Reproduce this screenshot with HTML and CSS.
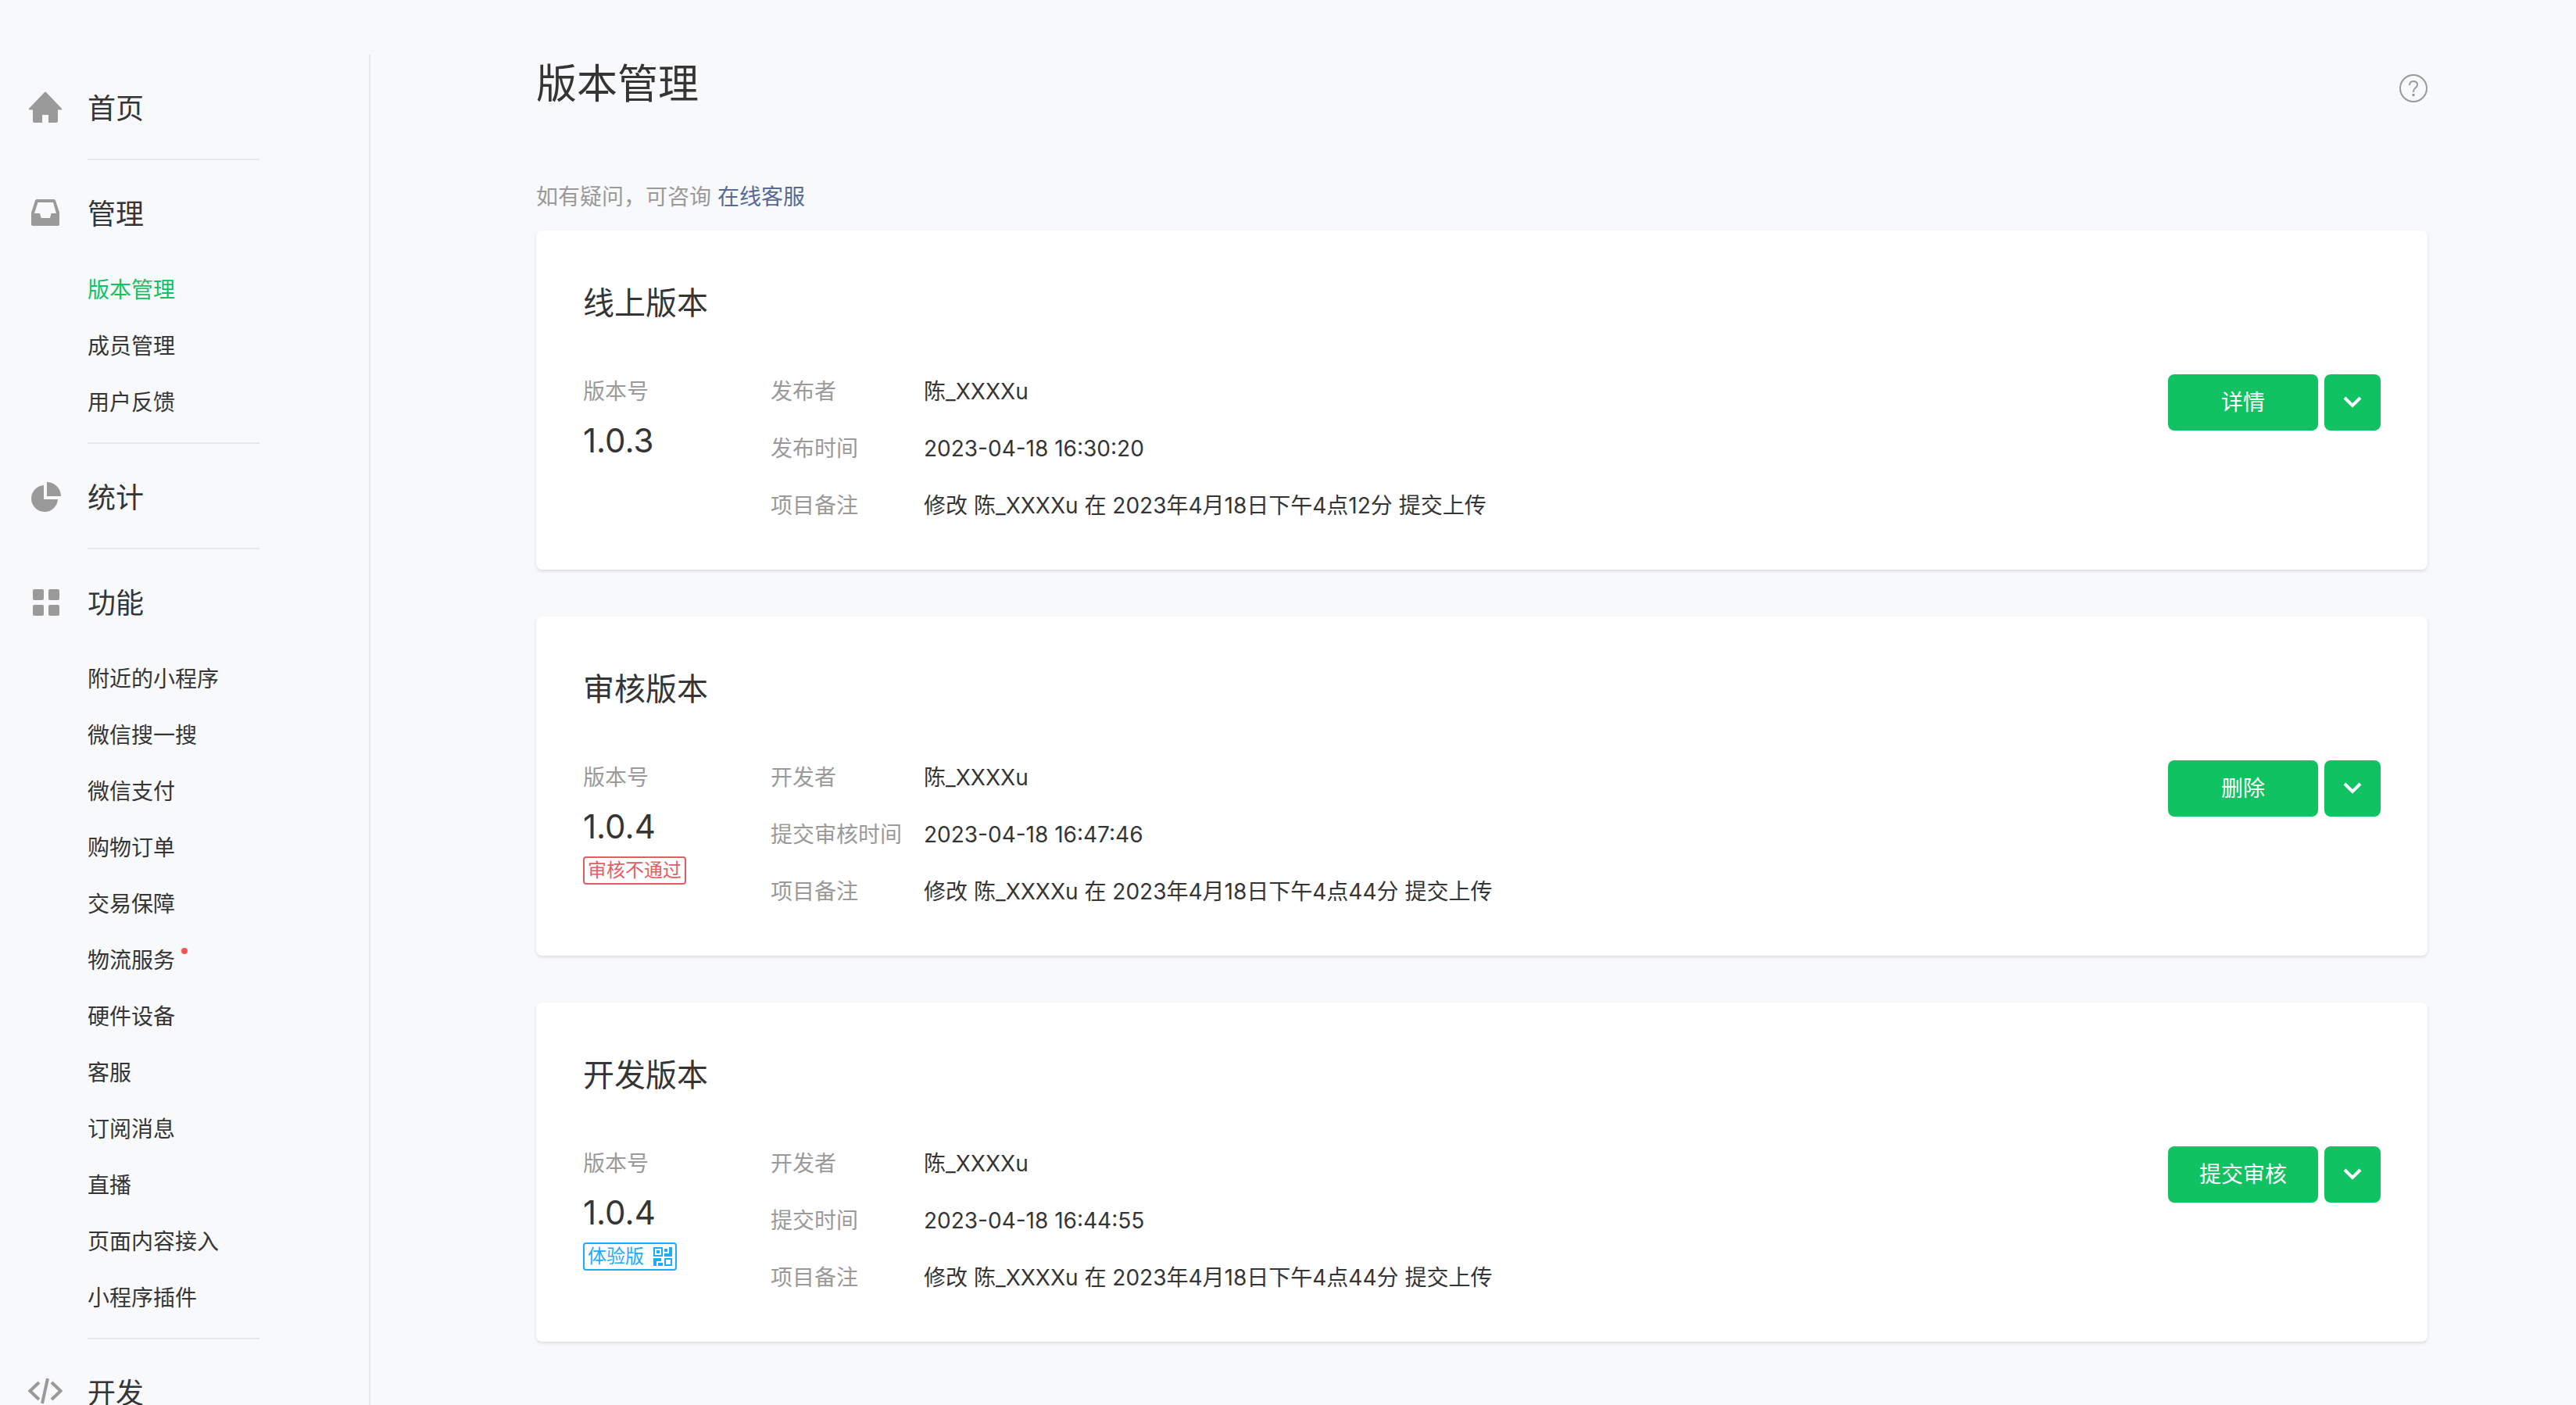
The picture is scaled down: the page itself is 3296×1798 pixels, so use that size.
FILE: index.html
```html
<!DOCTYPE html>
<html lang="zh-CN">
<head>
<meta charset="utf-8">
<title>版本管理</title>
<link rel="stylesheet" href="styles.css">
</head>
<body>
<div class="layout">
  <nav class="sidebar">
    <section class="menu">
      <h2 class="menu-title">
        <svg class="menu-icon" viewBox="0 2 44 44"><path d="M21 3q1-1 2 0l20 21q1 1.500-1 1.500h-4V40q0 2-2 2H26V32h-8v10H8q-2 0-2-2V25.500H2q-2 0-1-1.500z"/></svg>
        <a href="#home">首页</a>
      </h2>
    </section>
    <section class="menu menu-open">
      <h2 class="menu-title">
        <svg class="menu-icon" viewBox="0 2 44 44"><path fill-rule="evenodd" d="M11 5h22q1.500 0 2 1.500L40 22v15q0 2-2 2H6q-2 0-2-2V22L9 6.500Q9.500 5 11 5zm1.500 4L8 23h7l1.500 6h11.500l1.500-6h6.500L32 9z"/></svg>
        <a href="#manage">管理</a>
      </h2>
      <ul class="menu-list">
        <li><a class="current" href="#version">版本管理</a></li>
        <li><a href="#member">成员管理</a></li>
        <li><a href="#feedback">用户反馈</a></li>
      </ul>
    </section>
    <section class="menu">
      <h2 class="menu-title">
        <svg class="menu-icon" viewBox="0 1 44 44"><path d="M20 7v18h18a17 17 0 1 1-18-18z"/><path d="M24 3a18 18 0 0 1 18 18H24z"/></svg>
        <a href="#stats">统计</a>
      </h2>
    </section>
    <section class="menu menu-open">
      <h2 class="menu-title">
        <svg class="menu-icon" viewBox="0 1 44 44"><rect x="6" y="5" width="14" height="14" rx="2"/><rect x="26" y="5" width="14" height="14" rx="2"/><rect x="6" y="25" width="14" height="14" rx="2"/><rect x="26" y="25" width="14" height="14" rx="2"/></svg>
        <a href="#features">功能</a>
      </h2>
      <ul class="menu-list">
        <li><a href="#nearby">附近的小程序</a></li>
        <li><a href="#search">微信搜一搜</a></li>
        <li><a href="#pay">微信支付</a></li>
        <li><a href="#orders">购物订单</a></li>
        <li><a href="#guarantee">交易保障</a></li>
        <li><a class="has-news" href="#logistics">物流服务</a></li>
        <li><a href="#hardware">硬件设备</a></li>
        <li><a href="#service">客服</a></li>
        <li><a href="#subscribe">订阅消息</a></li>
        <li><a href="#live">直播</a></li>
        <li><a href="#content">页面内容接入</a></li>
        <li><a href="#plugins">小程序插件</a></li>
      </ul>
    </section>
    <section class="menu">
      <h2 class="menu-title">
        <svg class="menu-icon" viewBox="0 0 44 44"><path class="line" d="M14 8L2.500 19 14 30M30 8l11.500 11L30 30M25 3l-7 32"/></svg>
        <a href="#develop">开发</a>
      </h2>
    </section>
  </nav>

  <main class="content">
    <header class="page-head">
      <h1>版本管理</h1>
      <button class="help" type="button" aria-label="帮助">
        <svg viewBox="0 0 36 36"><circle cx="18" cy="18" r="17"/><path d="M13 14q0-5 5-5t5 4.500q0 2-2.500 4T18 22v1"/><path stroke-width="3" d="M18 25v3"/></svg>
      </button>
    </header>
    <p class="hint">如有疑问，可咨询 <a href="#support">在线客服</a></p>

    <section class="card">
      <h2>线上版本</h2>
      <div class="card-body">
        <div class="version">
          <span class="label">版本号</span>
          <strong class="number">1.0.3</strong>
        </div>
        <dl class="info">
          <dt>发布者</dt><dd>陈_XXXXu</dd>
          <dt>发布时间</dt><dd>2023-04-18 16:30:20</dd>
          <dt>项目备注</dt><dd>修改 陈_XXXXu 在 2023年4月18日下午4点12分 提交上传</dd>
        </dl>
        <div class="actions">
          <button class="btn" type="button">详情</button>
          <button class="btn btn-more" type="button" aria-label="更多"><svg viewBox="0 0 24 16"><path d="M2 2l10 10L22 2"/></svg></button>
        </div>
      </div>
    </section>

    <section class="card">
      <h2>审核版本</h2>
      <div class="card-body">
        <div class="version">
          <span class="label">版本号</span>
          <strong class="number">1.0.4</strong>
          <span class="tag tag-fail">审核不通过</span>
        </div>
        <dl class="info">
          <dt>开发者</dt><dd>陈_XXXXu</dd>
          <dt>提交审核时间</dt><dd>2023-04-18 16:47:46</dd>
          <dt>项目备注</dt><dd>修改 陈_XXXXu 在 2023年4月18日下午4点44分 提交上传</dd>
        </dl>
        <div class="actions">
          <button class="btn" type="button">删除</button>
          <button class="btn btn-more" type="button" aria-label="更多"><svg viewBox="0 0 24 16"><path d="M2 2l10 10L22 2"/></svg></button>
        </div>
      </div>
    </section>

    <section class="card">
      <h2>开发版本</h2>
      <div class="card-body">
        <div class="version">
          <span class="label">版本号</span>
          <strong class="number">1.0.4</strong>
          <a class="tag tag-trial" href="#trial">体验版
            <svg viewBox="0 0 24 24"><path fill-rule="evenodd" d="M0 0h12v12H0zM2 2v8h8V2zM4 4h4v4H4zM14 2h4v4h-4zM20 0h4v12H14V8h6zM0 14h10v4H4v6H0zM6 20h6v4H6zM14 14h10v10H14zM16 16v6h6v-6z"/></svg>
          </a>
        </div>
        <dl class="info">
          <dt>开发者</dt><dd>陈_XXXXu</dd>
          <dt>提交时间</dt><dd>2023-04-18 16:44:55</dd>
          <dt>项目备注</dt><dd>修改 陈_XXXXu 在 2023年4月18日下午4点44分 提交上传</dd>
        </dl>
        <div class="actions">
          <button class="btn" type="button">提交审核</button>
          <button class="btn btn-more" type="button" aria-label="更多"><svg viewBox="0 0 24 16"><path d="M2 2l10 10L22 2"/></svg></button>
        </div>
      </div>
    </section>
  </main>
</div>
</body>
</html>
```
FILE: styles.css
```css
* {
  box-sizing: border-box;
  margin: 0;
  padding: 0;
}

html {
  overflow: hidden;
}

body {
  background: #f8f9fb;
  color: #353535;
  font: 28px/45px Inter, "Noto Sans CJK SC", sans-serif;
}

a {
  color: inherit;
  text-decoration: none;
}

button {
  border: 0;
  background: none;
  font: inherit;
  cursor: pointer;
}

h1, h2, strong {
  font-weight: 400;
}

.layout {
  display: flex;
  padding-top: 70px;
}

/* Sidebar */
.sidebar {
  flex: none;
  width: 474px;
  padding-left: 36px;
  border-right: 2px solid #e7e8eb;
}

.menu {
  padding: 44px 0 39px;
}

.menu-open {
  padding-bottom: 14px;
}

.menu + .menu {
  position: relative;
}

.menu + .menu::before {
  content: "";
  position: absolute;
  top: -2px;
  left: 76px;
  width: 220px;
  border-top: 2px solid #e7e8eb;
}

.menu:not(:last-child) {
  margin-bottom: 2px;
}

.menu-title {
  display: flex;
  align-items: center;
  gap: 32px;
  font-size: 36px;
  line-height: 50px;
}

.menu-icon {
  width: 44px;
  height: 44px;
  fill: #9a9a9a;
}

.menu-icon .line {
  fill: none;
  stroke: #9a9a9a;
  stroke-width: 4;
}

.menu-list {
  margin-top: 36px;
  padding: 0 0 1px 76px;
  list-style: none;
}

.menu-list a {
  display: block;
  line-height: 72px;
}

.menu-list .current {
  color: #10c261;
}

.has-news::after {
  content: "";
  display: inline-block;
  width: 8px;
  height: 8px;
  margin-left: 8px;
  border-radius: 50%;
  background: #fa5151;
  vertical-align: 18px;
}

/* Content */
.content {
  flex: 1;
  min-width: 0;
  padding: 0 190px 80px 212px;
}

.page-head {
  display: flex;
  justify-content: space-between;
  align-items: flex-start;
  margin-bottom: 84px;
}

.page-head h1 {
  font-size: 52px;
  line-height: 76px;
}

.help {
  width: 36px;
  height: 36px;
  margin-top: 25px;
}

.help svg {
  display: block;
  fill: none;
  stroke: #9a9a9a;
  stroke-width: 2;
}

.hint {
  margin-bottom: 20px;
  color: #9a9a9a;
}

.hint a {
  color: #576b95;
}

.card {
  padding: 60px;
  border-radius: 8px;
  background: #fff;
  box-shadow: 0 2px 4px rgba(0, 0, 0, 0.12);
}

.card + .card {
  margin-top: 60px;
}

.card h2 {
  margin-bottom: 58px;
  font-size: 40px;
  line-height: 66px;
}

.card-body {
  display: flex;
  align-items: flex-start;
  margin-bottom: -1px;
}

.version {
  display: flex;
  flex: none;
  flex-direction: column;
  align-items: flex-start;
  width: 240px;
}

.label,
.info dt {
  color: #9a9a9a;
}

.number {
  margin-top: 7px;
  font-size: 42px;
  line-height: 66px;
}

.tag {
  display: flex;
  align-items: center;
  gap: 12px;
  margin-top: 5px;
  padding: 0 4px;
  border: 2px solid;
  border-radius: 4px;
  font-size: 24px;
  line-height: 32px;
}

.tag svg {
  width: 24px;
  height: 24px;
  fill: currentColor;
}

.tag-fail {
  color: #e15f63;
}

.tag-trial {
  color: #1aadff;
}

.info {
  display: grid;
  flex: 1;
  grid-template-columns: 196px 1fr;
  row-gap: 28px;
}

.actions {
  display: flex;
  flex: none;
  gap: 8px;
}

.btn {
  width: 192px;
  height: 72px;
  border-radius: 8px;
  background: #10c261;
  color: #fff;
}

.btn-more {
  display: flex;
  align-items: center;
  justify-content: center;
  width: 72px;
}

.btn-more svg {
  width: 24px;
  height: 16px;
  fill: none;
  stroke: #fff;
  stroke-width: 4;
}
```
